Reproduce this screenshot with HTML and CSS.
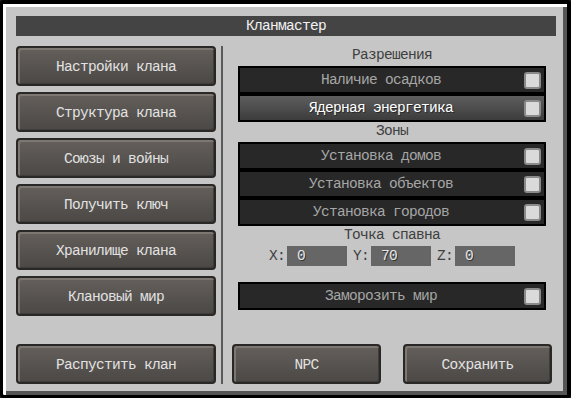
FILE: index.html
```html
<!DOCTYPE html>
<html lang="ru">
<head>
<meta charset="utf-8">
<title>Кланмастер</title>
<link rel="stylesheet" href="styles.css">
</head>
<body>
<div class="panel">
  <div class="title">Кланмастер</div>
  <div class="main">
    <div class="left">
      <div class="btn">Настройки клана</div>
      <div class="btn">Структура клана</div>
      <div class="btn">Союзы и войны</div>
      <div class="btn">Получить ключ</div>
      <div class="btn">Хранилище клана</div>
      <div class="btn">Клановый мир</div>
      <div class="btn btn-last">Распустить клан</div>
    </div>
    <div class="divider"></div>
    <div class="right">
      <div class="heading">Разрешения</div>
      <div class="group">
        <div class="toggle"><span class="label">Наличие осадков</span><span class="check"></span></div>
        <div class="toggle toggle-hover"><span class="label">Ядерная энергетика</span><span class="check"></span></div>
      </div>
      <div class="heading">Зоны</div>
      <div class="group">
        <div class="toggle"><span class="label">Установка домов</span><span class="check"></span></div>
        <div class="toggle"><span class="label">Установка объектов</span><span class="check"></span></div>
        <div class="toggle"><span class="label">Установка городов</span><span class="check"></span></div>
      </div>
      <div class="heading">Точка спавна</div>
      <div class="coords">
        <span class="coord-label">X:</span><span class="field">0</span>
        <span class="coord-label">Y:</span><span class="field">70</span>
        <span class="coord-label">Z:</span><span class="field">0</span>
      </div>
      <div class="group group-freeze">
        <div class="toggle"><span class="label">Заморозить мир</span><span class="check"></span></div>
      </div>
      <div class="bottom">
        <div class="btn btn-small">NPC</div>
        <div class="btn btn-small">Сохранить</div>
      </div>
    </div>
  </div>
</div>
</body>
</html>
```

FILE: styles.css
```css
* { box-sizing: border-box; }

html, body {
  margin: 0;
  padding: 0;
  background: #1c1f22;
}

body {
  font-family: "Liberation Mono", "DejaVu Sans Mono", monospace;
  font-size: 14.5px;
  letter-spacing: -0.7px;
}

.panel {
  width: 571px;
  height: 398px;
  background: #c6c6c6;
  border: 3px solid #000;
  border-top-width: 4px;
  border-right-width: 4px;
  border-radius: 4px;
  box-shadow: inset 3px 3px 0 #ffffff, inset -4px -4px 0 #555555;
  padding: 12px 11px 0 13px;
  display: flex;
  flex-direction: column;
}

.title {
  height: 20px;
  width: 540px;
  background: #444444;
  color: #f2f2f2;
  text-align: center;
  line-height: 20px;
}

.main {
  margin-top: 10px;
  height: 338px;
  display: flex;
}

.left {
  width: 200px;
  display: flex;
  flex-direction: column;
  gap: 6px;
}

.btn {
  height: 40px;
  border: 2px solid #2a2826;
  border-radius: 4px;
  background: linear-gradient(#645f5b, #4b4845);
  box-shadow: inset 2px 2px 0 #7d7772, inset -1px -1px 0 #3f3c3a;
  color: #e2e2e2;
  text-align: center;
  line-height: 36px;
  padding-top: 1px;
}

.btn-last {
  margin-top: auto;
}

.divider {
  width: 2px;
  background: #5a5a5a;
  margin: 0 9px 0 5px;
}

.right {
  width: 320px;
  display: flex;
  flex-direction: column;
}

.heading {
  height: 20px;
  line-height: 18px;
  text-align: center;
  color: #404040;
}

.group {
  margin: 0 6px;
  display: flex;
  flex-direction: column;
}

.group-freeze {
  margin-top: 16px;
}

.toggle {
  height: 28px;
  border: 2px solid #000;
  background: #282828;
  color: #a6a6a6;
  display: flex;
  align-items: center;
  padding-right: 3px;
  gap: 2px;
}

.toggle-hover {
  background: linear-gradient(#5e5e5e, #3c3c3c);
  color: #ffffff;
  text-shadow: 1px 1px 0 #2a2a2a;
}

.label {
  flex: 1;
  text-align: center;
  line-height: 24px;
}

.check {
  width: 17px;
  height: 17px;
  border: 2px solid #8a8a8a;
  border-radius: 3px;
  background: #dadada;
}

.coords {
  height: 20px;
  display: flex;
  justify-content: center;
  align-items: center;
}

.coord-label {
  width: 16px;
  margin-right: 2px;
  color: #404040;
}

.field {
  width: 60px;
  height: 20px;
  background: #666666;
  color: #e6e6e6;
  text-shadow: 1px 1px 0 #333333;
  padding-left: 10px;
  line-height: 20px;
  margin-right: 6px;
}

.field:last-child {
  margin-right: 0;
}

.bottom {
  margin-top: auto;
  display: flex;
  justify-content: space-between;
}

.btn-small {
  width: 149px;
}
```
